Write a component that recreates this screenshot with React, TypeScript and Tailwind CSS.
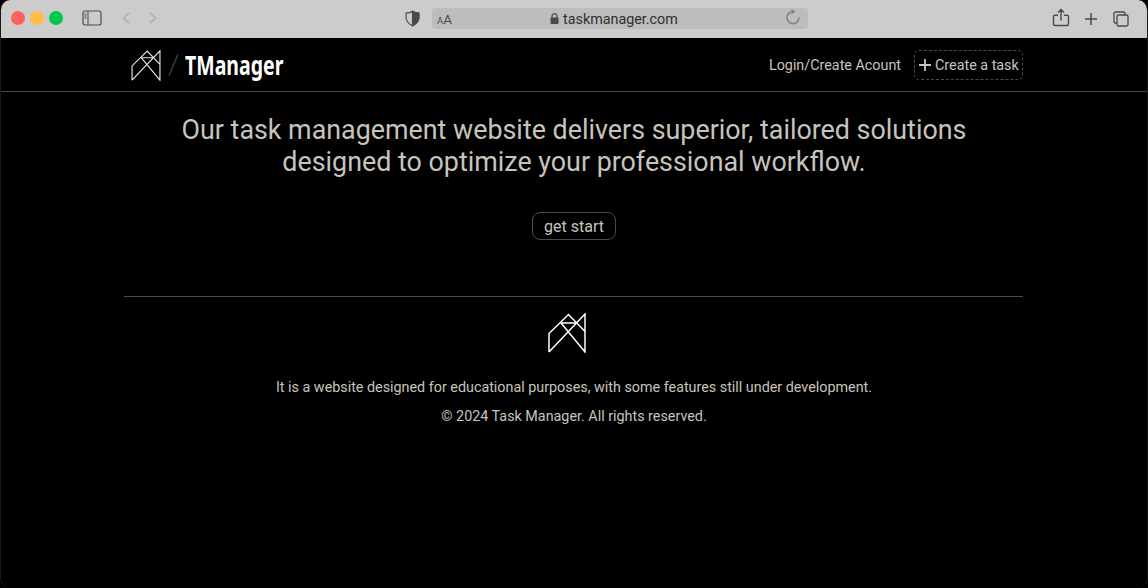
const Logo = ({ className }: { className: string }) => (
  <svg viewBox="0 0 38 40" className={className} fill="none" stroke="currentColor">
    <path d="M1 39V20.5L20.5 1.5L37 18.5M1 39L37 1V39L13 10H28" strokeWidth="1.5" />
  </svg>
);

function BrowserBar() {
  return (
    <div className="flex h-[38px] shrink-0 items-center bg-[#cccccc] pb-0.5 text-[#4a4a4a]">
      <div className="ml-[10px] flex gap-[5px]">
        <span className="size-[14px] rounded-full bg-[#ff605c]" />
        <span className="size-[14px] rounded-full bg-[#ffbd44]" />
        <span className="size-[14px] rounded-full bg-[#00ca4e]" />
      </div>
      <svg className="ml-[19px] h-4 w-5" viewBox="0 0 20 16" fill="none" stroke="currentColor">
        <rect x="1" y="1" width="18" height="14" rx="2" strokeWidth="1.2" />
        <path d="M6 1V15M2.5 4H4.5M2.5 6H4.5M2.5 8H4.5" />
      </svg>
      <svg className="ml-[19px] h-3 w-9 text-[#b0b0b3]" viewBox="0 0 36 12" fill="none" stroke="currentColor" strokeWidth="1.7">
        <path d="M8 .8L2.5 6L8 11.2M29 .8L34.5 6L29 11.2" />
      </svg>
      <svg className="ml-[248px] h-[17px] w-[15px]" viewBox="0 0 16 18" fill="none" stroke="currentColor" strokeWidth="1.2">
        <path d="M8 1.3C6 2.8 3.5 3.2 1.2 3.3V8.5C1.2 12 4 14.7 8 16.8C12 14.7 14.8 12 14.8 8.5V3.3C12.5 3.2 10 2.8 8 1.3Z" />
        <path d="M8 1.3V16.8C12 14.7 14.8 12 14.8 8.5V3.3C12.5 3.2 10 2.8 8 1.3Z" fill="currentColor" />
      </svg>
      <div className="mt-px ml-[12px] flex h-[21px] w-[376px] items-center rounded-[4px] bg-[#bdbdbd]">
        <div className="ml-[5px] flex w-[113px] items-baseline pt-[3px] leading-none">
          <span className="text-[9.5px]">A</span>
          <span className="text-[13.5px]">A</span>
        </div>
        <svg className="h-[11px] w-[9px]" viewBox="0 0 9 11" fill="none">
          <path d="M2 5V3.2A2.5 2.5 0 0 1 7 3.2V5" stroke="currentColor" strokeWidth="1.2" />
          <rect x=".5" y="4.5" width="8" height="6.5" rx="1" fill="currentColor" />
        </svg>
        <span className="ml-[4px] pt-[2px] text-[14.33px] text-[#303030]">taskmanager.com</span>
        <svg className="mr-[7px] mb-[3px] ml-auto size-4" viewBox="0 0 16 16" fill="none">
          <path d="M8 2.6A6 6 0 1 0 14 8.6" stroke="#888" strokeWidth="1.8" />
          <path d="M6.5 0L10.5 2.8L6.5 5.6Z" fill="#888" />
        </svg>
      </div>
      <svg className="ml-[244px] h-5 w-[18px]" viewBox="0 0 18 20" fill="none" stroke="currentColor" strokeWidth="1.4">
        <path d="M6 7.2H3A1.5 1.5 0 0 0 1.5 8.7V16A1.5 1.5 0 0 0 3 17.5H15A1.5 1.5 0 0 0 16.5 16V8.7A1.5 1.5 0 0 0 15 7.2H12M9 12.5V1.7M6 4.5L9 1.5L12 4.5" />
      </svg>
      <svg className="mt-0.5 ml-[15px] size-3" viewBox="0 0 12 12" stroke="currentColor" strokeWidth="1.5">
        <path d="M6 0V12M0 6H12" />
      </svg>
      <svg className="mt-px ml-[16px] size-4" viewBox="0 0 16 16" fill="none" stroke="currentColor" strokeWidth="1.3">
        <rect x="4" y="4" width="11" height="11" rx="1.5" />
        <path d="M4 12H2.5A1.5 1.5 0 0 1 1 10.5V2.5A1.5 1.5 0 0 1 2.5 1H10.5A1.5 1.5 0 0 1 12 2.5V4" />
      </svg>
    </div>
  );
}

export default function App() {
  return (
    <div className="h-[588px] w-[1148px] bg-black font-['Roboto',sans-serif] text-[#c8c3bc]">
      <div className="flex h-full flex-col overflow-hidden rounded-[10px] border-x border-[#171717] bg-black">
        <BrowserBar />
        <header className="h-[54px] shrink-0 border-b border-[#4b4b4b]">
          <div className="mx-auto flex h-full w-[900px] items-center">
            <Logo className="mt-px ml-[7px] h-[31px] w-[30px] text-[#e5e5e5]" />
            <svg className="ml-[7px] h-[22px] w-[11px]" viewBox="0 0 11 22" stroke="#3c3c3c" strokeWidth="1.5">
              <path d="M1 21.5L10 .5" />
            </svg>
            <h1 className="mt-0.5 ml-[6px] w-[100px] origin-left scale-x-[0.75] font-['Noto_Sans',sans-serif] text-[26px] font-bold whitespace-nowrap text-white">TManager</h1>
            <a className="mt-0.5 ml-auto text-[14.33px]">Login/Create Acount</a>
            <button className="mr-px ml-[13px] flex h-[30px] w-[109px] items-center rounded-[5px] border border-dashed border-[#4b4b4b] pl-[4px] text-[14.33px] whitespace-nowrap">
              <svg className="mr-[4px] size-3 shrink-0" viewBox="0 0 12 12" stroke="currentColor" strokeWidth="1.8">
                <path d="M6 0V12M0 6H12" />
              </svg>
              <span className="pt-0.5">Create a task</span>
            </button>
          </div>
        </header>
        <main className="mx-auto flex w-[900px] flex-col items-center">
          <h2 className="mt-[22px] text-center text-[26.85px] leading-[32px]">
            Our task management website delivers superior, tailored solutions
            <br />
            designed to optimize your professional workflow.
          </h2>
          <button className="mt-[34px] h-7 w-[84px] rounded-[8px] border border-[#4b4b4b] pt-px text-[16px]">get start</button>
          <footer className="mt-14 mr-px flex w-[899px] flex-col items-center border-t border-[#4b4b4b] text-[14.33px]">
            <Logo className="mt-4 mr-[13px] h-10 w-[38px] text-white" />
            <p className="mt-6 ml-px leading-5">It is a website designed for educational purposes, with some features still under development.</p>
            <p className="mt-[9px] ml-px leading-5">© 2024 Task Manager. All rights reserved.</p>
          </footer>
        </main>
      </div>
    </div>
  );
}
